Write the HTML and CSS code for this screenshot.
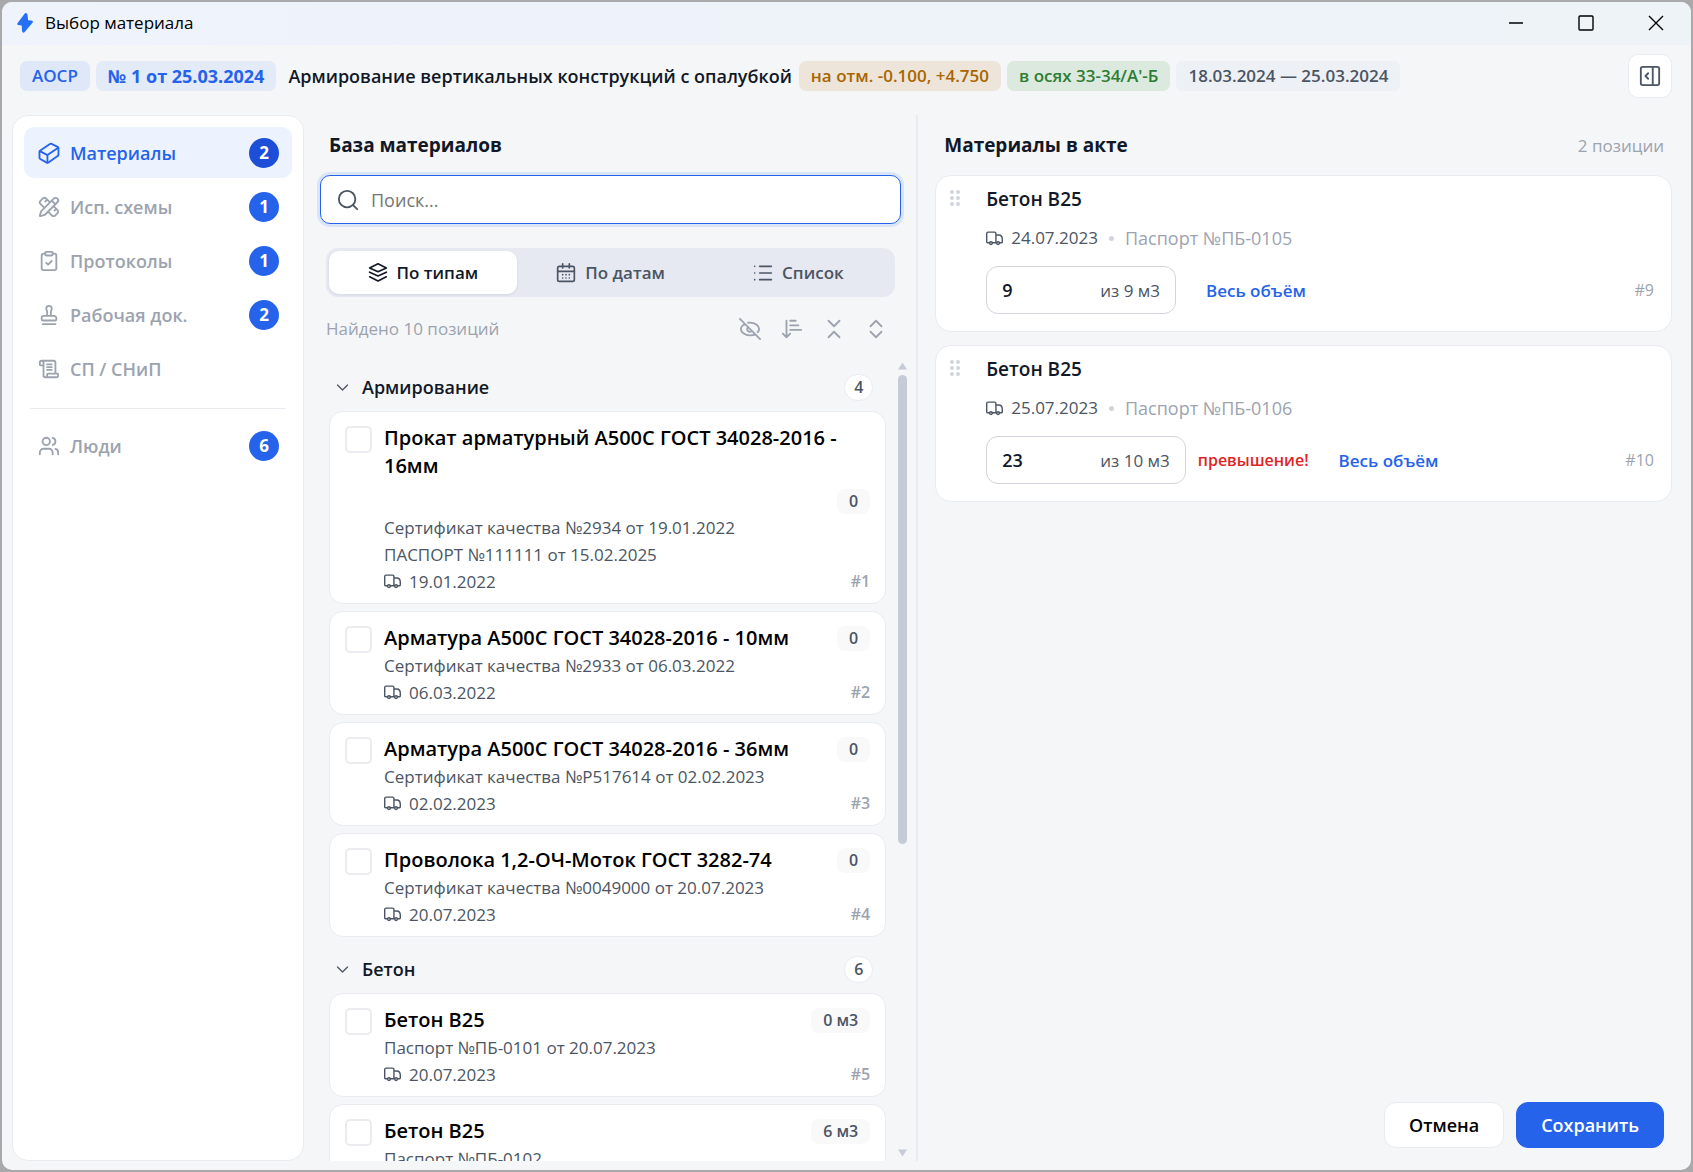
FILE: index.html
```html
<!DOCTYPE html>
<html lang="ru">
<head>
  <meta charset="UTF-8" />
  <meta name="viewport" content="width=device-width, initial-scale=1.0" />
  <title>Выбор материала</title>
  <link rel="stylesheet" href="styles.css">
</head>
<body>
  <svg class="sprite" aria-hidden="true">
    <symbol id="i-box" viewBox="0 0 24 24"><path d="M2.500 9.200 13 2.200a1.800 1.800 0 0 1 1.800-.1l6.600 3.200a1.600 1.600 0 0 1 .9 1.400v7.100a2 2 0 0 1-.9 1.600l-10 7a1.800 1.800 0 0 1-1.900.1l-7-3.900a1.800 1.800 0 0 1-.9-1.500v-6.500a2 2 0 0 1 .9-1.400Z"/><path d="m2 9.900 8.300 4.400L22 6.300M10.300 14.300v8"/></symbol>
    <symbol id="i-tools" viewBox="0 0 24 24"><path d="M13 7 8.700 2.700a2.410 2.410 0 0 0-3.400 0L2.700 5.300a2.410 2.410 0 0 0 0 3.400L7 13M8 6l2-2M18 16l2-2M17 11l4.300 4.300c.94.94.94 2.460 0 3.400l-2.600 2.600c-.94.94-2.460.94-3.400 0L11 17M21.174 6.812a1 1 0 0 0-3.986-3.987L3.842 16.174a2 2 0 0 0-.5.83l-1.321 4.352a.5.5 0 0 0 .623.622l4.353-1.320a2 2 0 0 0 .83-.497zM15 5l4 4"/></symbol>
    <symbol id="i-clipboard" viewBox="0 0 24 24"><rect x="8" y="2" width="8" height="4" rx="1"/><path d="M16 4h2a2 2 0 0 1 2 2v14a2 2 0 0 1-2 2H6a2 2 0 0 1-2-2V6a2 2 0 0 1 2-2h2M9 14l2 2 4-4"/></symbol>
    <symbol id="i-stamp" viewBox="0 0 24 24"><path d="M5 22h14M19.270 13.730A2.500 2.500 0 0 0 17.500 13h-11A2.500 2.500 0 0 0 4 15.500V17a1 1 0 0 0 1 1h14a1 1 0 0 0 1-1v-1.500c0-.66-.26-1.300-.73-1.770ZM14 13V8.500C14 7 15 7 15 5a3 3 0 0 0-3-3c-1.660 0-3 1-3 3s1 2 1 3.500V13"/></symbol>
    <symbol id="i-scroll" viewBox="0 0 24 24"><path d="M15 13h-5M15 10h-5M15 7h-5M19 17V5a2 2 0 0 0-2-2H4M8 21h12a2 2 0 0 0 2-2v-1a1 1 0 0 0-1-1H11a1 1 0 0 0-1 1v1a2 2 0 1 1-4 0V5a2 2 0 1 0-4 0v2a1 1 0 0 0 1 1h3"/></symbol>
    <symbol id="i-users" viewBox="0 0 24 24"><circle cx="9" cy="7" r="4"/><path d="M16 21v-2a4 4 0 0 0-4-4H6a4 4 0 0 0-4 4v2M22 21v-2a4 4 0 0 0-3-3.870M16 3.130a4 4 0 0 1 0 7.750"/></symbol>
    <symbol id="i-search" viewBox="0 0 24 24"><circle cx="11" cy="11" r="9"/><path d="m17.500 17.500 4.500 4.500"/></symbol>
    <symbol id="i-stack" viewBox="0 0 24 24"><path d="m12 1-10 5 10 4.500L22 6zM2 11l10 4.500L22 11M2 16.500 12 21.500l10-5"/></symbol>
    <symbol id="i-calendar" viewBox="0 0 24 24"><rect x="2" y="4" width="20" height="18" rx="2"/><path d="M8 1v5M16 1v5M2 10h20M8 14h.01M12 14h.01M16 14h.01M8 18h.01M12 18h.01M16 18h.01"/></symbol>
    <symbol id="i-list" viewBox="0 0 24 24"><path d="M8 4h14M8 12h14M8 20h14M2 4h.01M2 12h.01M2 20h.01"/></symbol>
    <symbol id="i-eye-off" viewBox="0 0 24 24"><path d="M9.880 9.880a3 3 0 1 0 4.240 4.240M10 5.200A10 10 0 0 1 12 5c6 0 10 4 10 7 0 1.200-.6 2.400-1.600 3.500M6.600 6.600C3.700 8.100 2 10.200 2 12c0 3 4 7 10 7 2.200 0 4.100-.5 5.700-1.300M1 1l22 22"/></symbol>
    <symbol id="i-sort" viewBox="0 0 24 24"><path d="m2 17 4 4 4-4M6 21V3M10 3h6M10 8h9M10 13h12"/></symbol>
    <symbol id="i-collapse" viewBox="0 0 24 24"><path d="m6 3 6 6 6-6M6 21l6-6 6 6"/></symbol>
    <symbol id="i-expand" viewBox="0 0 24 24"><path d="m6 9 6-6 6 6M6 15l6 6 6-6"/></symbol>
    <symbol id="i-chevron" viewBox="0 0 24 24"><path d="m4 8 8 8 8-8"/></symbol>
    <symbol id="i-truck" viewBox="0 0 24 24"><path d="M14 18V5a2 2 0 0 0-2-2H3a2 2 0 0 0-2 2v12a1 1 0 0 0 1 1h3M15 18H9M19 18h3a1 1 0 0 0 1-1v-4c0-4-2.500-6-5-6h-4"/><circle cx="17" cy="18.500" r="2"/><circle cx="7" cy="18.500" r="2"/></symbol>
    <symbol id="i-panel" viewBox="0 0 24 24"><rect x="2" y="2" width="20" height="20" rx="2"/><path d="M15 2v20M10 15l-3-3 3-3"/></symbol>
    <symbol id="i-grip" viewBox="0 0 12 18"><circle cx="3" cy="3" r="2"/><circle cx="9" cy="3" r="2"/><circle cx="3" cy="9" r="2"/><circle cx="9" cy="9" r="2"/><circle cx="3" cy="15" r="2"/><circle cx="9" cy="15" r="2"/></symbol>
  </svg>

  <div class="window">
    <header class="titlebar">
      <svg class="bolt" viewBox="0 0 16 20" aria-hidden="true"><path d="M9.500.3c-.5-.5-1.200-.4-1.700.2L.6 10c-.7 1-.3 2 .9 2.100l3.200.3.4 5.900c.1 1.500 1.700 2 2.600.8l7.800-9.300c.8-1 .3-2.200-1-2.300l-3.400-.3-.6-5.500C10.400 1.100 10 .7 9.500.3Z"/></svg>
      <span class="titlebar-text">Выбор материала</span>
      <div class="win-buttons">
        <button aria-label="Свернуть"><svg viewBox="0 0 16 16"><path d="M1 8h14"/></svg></button>
        <button aria-label="Развернуть"><svg viewBox="0 0 16 16"><rect x="1" y="1" width="14" height="14" rx="1"/></svg></button>
        <button aria-label="Закрыть"><svg viewBox="0 0 16 16"><path d="m1 1 14 14M15 1 1 15"/></svg></button>
      </div>
    </header>

    <div class="act-bar">
      <span class="tag tag-type">АОСР</span>
      <span class="tag tag-number">№ 1 от 25.03.2024</span>
      <h1>Армирование вертикальных конструкций с опалубкой</h1>
      <span class="tag tag-level">на отм. -0.100, +4.750</span>
      <span class="tag tag-axes">в осях 33-34/А'-Б</span>
      <span class="tag tag-dates">18.03.2024 — 25.03.2024</span>
      <button class="panel-toggle" aria-label="Боковая панель"><svg class="icon"><use href="#i-panel"/></svg></button>
    </div>

    <div class="columns">
      <nav class="sidebar">
        <a class="nav-item active" href="#"><svg class="icon"><use href="#i-box"/></svg>Материалы<span class="badge">2</span></a>
        <a class="nav-item" href="#"><svg class="icon"><use href="#i-tools"/></svg>Исп. схемы<span class="badge">1</span></a>
        <a class="nav-item" href="#"><svg class="icon"><use href="#i-clipboard"/></svg>Протоколы<span class="badge">1</span></a>
        <a class="nav-item" href="#"><svg class="icon"><use href="#i-stamp"/></svg>Рабочая док.<span class="badge">2</span></a>
        <a class="nav-item" href="#"><svg class="icon"><use href="#i-scroll"/></svg>СП / СНиП</a>
        <hr>
        <a class="nav-item" href="#"><svg class="icon"><use href="#i-users"/></svg>Люди<span class="badge">6</span></a>
      </nav>

      <section class="base">
        <h2>База материалов</h2>
        <label class="search">
          <svg class="icon"><use href="#i-search"/></svg>
          <input type="text" placeholder="Поиск..." aria-label="Поиск">
        </label>
        <div class="tabs">
          <button class="active"><svg class="icon"><use href="#i-stack"/></svg>По типам</button>
          <button><svg class="icon"><use href="#i-calendar"/></svg>По датам</button>
          <button><svg class="icon"><use href="#i-list"/></svg>Список</button>
        </div>
        <div class="tools">
          <span>Найдено 10 позиций</span>
          <button aria-label="Скрыть использованные"><svg class="icon"><use href="#i-eye-off"/></svg></button>
          <button aria-label="Сортировка"><svg class="icon"><use href="#i-sort"/></svg></button>
          <button aria-label="Свернуть все"><svg class="icon"><use href="#i-collapse"/></svg></button>
          <button aria-label="Развернуть все"><svg class="icon"><use href="#i-expand"/></svg></button>
        </div>

        <div class="scroll-area">
          <div class="list">
            <button class="group"><svg class="icon"><use href="#i-chevron"/></svg>Армирование<span class="count">4</span></button>
            <article class="card">
              <input type="checkbox" id="m1">
              <div class="card-body">
                <div class="card-head"><label for="m1">Прокат арматурный А500С ГОСТ 34028-2016 - 16мм</label><span class="chip">0</span></div>
                <p>Сертификат качества №2934 от 19.01.2022</p>
                <p>ПАСПОРТ №111111 от 15.02.2025</p>
                <p class="date"><svg class="icon"><use href="#i-truck"/></svg>19.01.2022<span class="num">#1</span></p>
              </div>
            </article>
            <article class="card">
              <input type="checkbox" id="m2">
              <div class="card-body">
                <div class="card-head"><label for="m2">Арматура А500С ГОСТ 34028-2016 - 10мм</label><span class="chip">0</span></div>
                <p>Сертификат качества №2933 от 06.03.2022</p>
                <p class="date"><svg class="icon"><use href="#i-truck"/></svg>06.03.2022<span class="num">#2</span></p>
              </div>
            </article>
            <article class="card">
              <input type="checkbox" id="m3">
              <div class="card-body">
                <div class="card-head"><label for="m3">Арматура А500С ГОСТ 34028-2016 - 36мм</label><span class="chip">0</span></div>
                <p>Сертификат качества №Р517614 от 02.02.2023</p>
                <p class="date"><svg class="icon"><use href="#i-truck"/></svg>02.02.2023<span class="num">#3</span></p>
              </div>
            </article>
            <article class="card">
              <input type="checkbox" id="m4">
              <div class="card-body">
                <div class="card-head"><label for="m4">Проволока 1,2-ОЧ-Моток ГОСТ 3282-74</label><span class="chip">0</span></div>
                <p>Сертификат качества №0049000 от 20.07.2023</p>
                <p class="date"><svg class="icon"><use href="#i-truck"/></svg>20.07.2023<span class="num">#4</span></p>
              </div>
            </article>

            <button class="group"><svg class="icon"><use href="#i-chevron"/></svg>Бетон<span class="count">6</span></button>
            <article class="card">
              <input type="checkbox" id="m5">
              <div class="card-body">
                <div class="card-head"><label for="m5">Бетон В25</label><span class="chip">0 м3</span></div>
                <p>Паспорт №ПБ-0101 от 20.07.2023</p>
                <p class="date"><svg class="icon"><use href="#i-truck"/></svg>20.07.2023<span class="num">#5</span></p>
              </div>
            </article>
            <article class="card">
              <input type="checkbox" id="m6">
              <div class="card-body">
                <div class="card-head"><label for="m6">Бетон В25</label><span class="chip">6 м3</span></div>
                <p>Паспорт №ПБ-0102</p>
              </div>
            </article>
          </div>
          <div class="scrollbar" aria-hidden="true">
            <svg viewBox="0 0 10 8"><path d="M5 0 10 8H0Z"/></svg>
            <div class="track"><div class="thumb"></div></div>
            <svg viewBox="0 0 10 8"><path d="M5 8 10 0H0Z"/></svg>
          </div>
        </div>
      </section>

      <section class="act">
        <div class="act-head">
          <h2>Материалы в акте</h2>
          <span>2 позиции</span>
        </div>

        <article class="entry">
          <svg class="grip" aria-hidden="true"><use href="#i-grip"/></svg>
          <div class="entry-body">
            <h3>Бетон В25</h3>
            <p class="meta"><svg class="icon"><use href="#i-truck"/></svg>24.07.2023<i class="dot"></i><span>Паспорт №ПБ-0105</span></p>
            <div class="volume">
              <label class="qty"><input type="text" value="9" aria-label="Объём"><span>из 9 м3</span></label>
              <button class="all">Весь объём</button>
              <span class="num">#9</span>
            </div>
          </div>
        </article>

        <article class="entry">
          <svg class="grip" aria-hidden="true"><use href="#i-grip"/></svg>
          <div class="entry-body">
            <h3>Бетон В25</h3>
            <p class="meta"><svg class="icon"><use href="#i-truck"/></svg>25.07.2023<i class="dot"></i><span>Паспорт №ПБ-0106</span></p>
            <div class="volume">
              <label class="qty"><input type="text" value="23" aria-label="Объём"><span>из 10 м3</span></label>
              <span class="warn">превышение!</span>
              <button class="all">Весь объём</button>
              <span class="num">#10</span>
            </div>
          </div>
        </article>

        <footer class="actions">
          <button class="btn">Отмена</button>
          <button class="btn btn-primary">Сохранить</button>
        </footer>
      </section>
    </div>
  </div>
</body>
</html>
```
FILE: styles.css
```css
:root {
  --primary: #2563eb;
  --bg: #f5f6f8;
  --text: #111827;
  --gray: #4b5563;
  --muted: #9ca3af;
  --border: #e9ebf0;
}

* {
  box-sizing: border-box;
  margin: 0;
  padding: 0;
  font-family: 'Segoe UI', 'Open Sans', sans-serif;
}

body {
  height: 100vh;
  padding: 2px;
  background: #a9a9ab;
  color: var(--text);
  font-size: 17px;
}

button {
  border: none;
  background: none;
  color: inherit;
  font-size: inherit;
  cursor: pointer;
}

a {
  color: inherit;
  text-decoration: none;
}

.sprite {
  display: none;
}

.icon {
  flex: none;
  width: 22px;
  height: 22px;
  fill: none;
  stroke: currentColor;
  stroke-width: 2;
  stroke-linecap: round;
  stroke-linejoin: round;
}

.window {
  display: flex;
  flex-direction: column;
  height: 100%;
  border-radius: 10px;
  background: var(--bg);
  overflow: hidden;
}

/* Title bar */
.titlebar {
  display: flex;
  align-items: center;
  gap: 12px;
  height: 43px;
  padding: 0 0 2px 15px;
  background: linear-gradient(90deg, #eef3fc, #eef3f8);
  color: #000;
}

.bolt {
  width: 16px;
  height: 20px;
  fill: #2670f8;
}

.win-buttons {
  display: flex;
  margin-left: auto;
}

.win-buttons button {
  display: flex;
  justify-content: center;
  width: 70px;
}

.win-buttons svg {
  width: 16px;
  height: 16px;
  fill: none;
  stroke: #000;
  stroke-width: 1.4;
}

/* Act summary */
.act-bar {
  display: flex;
  align-items: center;
  gap: 6px;
  height: 70px;
  padding: 0 19px 8px 18px;
}

.act-bar h1 {
  padding: 0 1px 0 6px;
  font-size: 18px;
  font-weight: 600;
  white-space: nowrap;
}

.tag {
  padding: 0 12px;
  border-radius: 7px;
  line-height: 30px;
  font-weight: 600;
  white-space: nowrap;
}

.tag-type {
  background: #dfe8f9;
  color: var(--primary);
}

.tag-number {
  background: #e3eaf8;
  color: var(--primary);
  font-size: 18px;
  font-weight: 700;
}

.tag-level {
  background: #eee5da;
  color: #a96500;
}

.tag-axes {
  background: #dbe9df;
  color: #2e7d32;
}

.tag-dates {
  background: #edf0f5;
  color: var(--gray);
}

.panel-toggle {
  display: flex;
  align-items: center;
  justify-content: center;
  width: 44px;
  height: 44px;
  margin-left: auto;
  border: 1px solid var(--border);
  border-radius: 10px;
  background: white;
  color: var(--gray);
}

.columns {
  display: grid;
  grid-template-columns: 302px minmax(0, 31fr) minmax(0, 39fr);
  flex: 1;
  min-height: 0;
  padding-bottom: 9px;
}

/* Sidebar */
.sidebar {
  display: flex;
  flex-direction: column;
  gap: 3px;
  margin-left: 10px;
  padding: 11px;
  border: 1px solid var(--border);
  border-radius: 16px;
  background: white;
  color: var(--muted);
}

.nav-item {
  display: flex;
  align-items: center;
  gap: 10px;
  height: 51px;
  padding: 0 13px 0 14px;
  border-radius: 10px;
  font-size: 18px;
  font-weight: 600;
}

.nav-item.active {
  background: #ecf3ff;
  color: var(--primary);
}

.badge {
  width: 30px;
  margin-left: auto;
  border-radius: 50%;
  background: var(--primary);
  color: white;
  font-size: 17px;
  font-weight: 700;
  line-height: 30px;
  text-align: center;
}

.active .badge {
  background: #1d4ed8;
}

.sidebar hr {
  margin: 11px 6px 8px;
  border: none;
  border-top: 1px solid var(--border);
}

/* Materials base */
.base {
  display: flex;
  flex-direction: column;
  min-height: 0;
  padding: 0 9px 0 16px;
  border-right: 2px solid #eaecef;
}

h2 {
  padding: 0 9px;
  color: var(--text);
  font-size: 19px;
  font-weight: 700;
  line-height: 60px;
}

.search {
  display: flex;
  align-items: center;
  gap: 12px;
  height: 49px;
  margin-right: 6px;
  padding: 0 16px;
  border: 1px solid var(--primary);
  border-radius: 10px;
  background: white;
  box-shadow: 0 0 0 3px #dae5f8;
  color: var(--gray);
}

.search input {
  flex: 1;
  min-width: 0;
  border: none;
  outline: none;
  font-size: 18px;
}

.search input::placeholder {
  color: #757575;
}

.tabs {
  display: flex;
  margin: 24px 12px 0 6px;
  padding: 3px;
  border-radius: 12px;
  background: #e6e9f1;
}

.tabs button {
  display: flex;
  flex: 1;
  align-items: center;
  justify-content: center;
  gap: 9px;
  height: 43px;
  border-radius: 10px;
  color: var(--gray);
  font-size: 17px;
  font-weight: 600;
}

.tabs .active {
  background: white;
  box-shadow: 0 1px 3px rgba(0, 0, 0, 0.08);
  color: var(--text);
}

.tabs .icon {
  width: 20px;
  height: 20px;
}

.tools {
  display: flex;
  align-items: center;
  gap: 20px;
  height: 65px;
  padding: 0 20px 2px 6px;
  color: var(--muted);
  font-weight: 500;
}

.tools span {
  margin-right: auto;
}

.tools button {
  display: flex;
}

.scroll-area {
  display: flex;
  flex: 1;
  gap: 12px;
  min-height: 0;
}

.list {
  display: flex;
  flex: 1;
  flex-direction: column;
  gap: 7px;
  min-width: 0;
  padding-left: 9px;
  overflow: hidden;
}

.group {
  display: flex;
  flex: none;
  align-items: center;
  gap: 12px;
  height: 42px;
  padding: 8px 13px 0 6px;
  font-size: 18px;
  font-weight: 600;
}

.group .icon {
  width: 15px;
  height: 15px;
  color: var(--gray);
}

.count {
  min-width: 29px;
  margin-left: auto;
  border: 1px solid var(--border);
  border-radius: 14px;
  background: white;
  color: var(--gray);
  font-size: 16px;
  line-height: 25px;
}

.card {
  display: flex;
  flex: none;
  gap: 12px;
  padding: 12px 15px 8px;
  border: 1px solid var(--border);
  border-radius: 14px;
  background: white;
}

.card > input {
  flex: none;
  width: 27px;
  height: 27px;
  margin-top: 2px;
  border: 2px solid #ececf0;
  border-radius: 5px;
  appearance: none;
}

.card-body {
  flex: 1;
  min-width: 0;
  color: var(--gray);
  line-height: 27px;
}

.card-head {
  display: flex;
  flex-wrap: wrap;
  align-items: center;
  gap: 9px;
}

.card-head label {
  color: #000;
  font-size: 20px;
  font-weight: 600;
  line-height: 28px;
}

.chip {
  margin-left: auto;
  padding: 0 12px;
  border-radius: 8px;
  background: #f9f9fa;
  font-size: 16px;
  font-weight: 600;
  line-height: 25px;
}

.date {
  display: flex;
  align-items: center;
  gap: 8px;
}

.date .icon,
.meta .icon {
  width: 17px;
  height: 17px;
}

.num {
  margin-left: auto;
  color: var(--muted);
  font-size: 16px;
}

.card .num {
  font-weight: 600;
}

.scrollbar {
  display: flex;
  flex-direction: column;
  gap: 5px;
  width: 9px;
  padding: 0 0 4px;
}

.scrollbar svg {
  width: 9px;
  height: 8px;
  fill: #c5ccd6;
}

.track {
  flex: 1;
}

.thumb {
  height: 61%;
  border-radius: 5px;
  background: #c5ccd6;
}

/* Materials in the act */
.act {
  display: flex;
  flex-direction: column;
  gap: 13px;
  padding: 0 19px 13px 17px;
}

.act-head {
  display: flex;
  align-items: center;
  justify-content: space-between;
  margin-bottom: -13px;
  padding-right: 8px;
  color: var(--muted);
}

.entry {
  display: flex;
  gap: 25px;
  padding: 9px 17px 17px 13px;
  border: 1px solid var(--border);
  border-radius: 16px;
  background: white;
}

.grip {
  flex: none;
  width: 12px;
  height: 18px;
  margin-top: 4px;
  fill: #d1d5db;
}

.entry-body {
  flex: 1;
}

h3 {
  font-size: 19px;
  font-weight: 600;
  line-height: 28px;
}

.meta {
  display: flex;
  align-items: center;
  gap: 8px;
  margin: 11px 0 14px;
  color: var(--gray);
  line-height: 28px;
}

.meta .dot {
  width: 5px;
  height: 5px;
  margin: 0 3px;
  border-radius: 50%;
  background: #d1d5db;
}

.meta span {
  color: var(--muted);
  font-size: 18px;
}

.volume {
  display: flex;
  align-items: center;
  gap: 12px;
}

.qty {
  display: flex;
  align-items: center;
  height: 48px;
  padding: 0 15px;
  border: 1px solid #d3d5dd;
  border-radius: 12px;
  color: var(--gray);
}

.qty input {
  width: 98px;
  border: none;
  outline: none;
  color: var(--text);
  font-size: 18px;
  font-weight: 600;
}

.warn {
  color: #dc2626;
  font-size: 16px;
  font-weight: 600;
}

.all {
  margin-left: 18px;
  color: var(--primary);
  font-size: 17px;
  font-weight: 600;
}

.actions {
  display: flex;
  justify-content: flex-end;
  gap: 12px;
  margin-top: auto;
  padding-right: 8px;
}

.btn {
  height: 46px;
  padding: 0 24px;
  border: 1px solid var(--border);
  border-radius: 12px;
  background: white;
  color: #000;
  font-size: 18px;
  font-weight: 600;
}

.btn-primary {
  border-color: var(--primary);
  background: var(--primary);
  color: white;
}
```
